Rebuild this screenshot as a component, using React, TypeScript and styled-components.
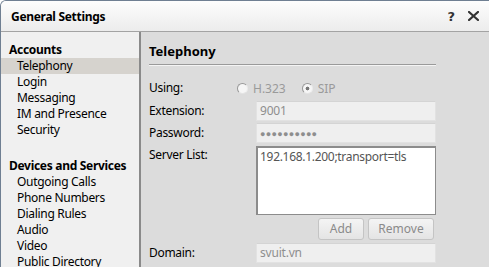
import React from "react";
import styled, { createGlobalStyle } from "styled-components";

const Global = createGlobalStyle`
  html, body { margin: 0; padding: 0; background: #ffffff; }
  body { font-family: "Noto Sans", "Open Sans", "Liberation Sans", sans-serif; font-size: 12px; color: #000; }
  * { box-sizing: border-box; }
`;

const Window = styled.div`
  width: 489px;
  height: 267px;
  display: flex;
  flex-direction: column;
  overflow: hidden;
  border-left: 1px solid #6f7f92;
  border-top: 1px solid #6f7f92;
  border-top-left-radius: 6px;
  background: #dcdcdc;
`;

const TitleBar = styled.div`
  height: 31px;
  flex: none;
  display: flex;
  align-items: center;
  justify-content: space-between;
  padding: 0 10px 0 10px;
  background: linear-gradient(#fdfdfd, #ececec);
  border-bottom: 1px solid #a3a3a3;
`;

const Title = styled.div`
  font-weight: bold;
  font-size: 12px;
  letter-spacing: -0.3px;
`;

const TitleButtons = styled.div`
  display: flex;
  align-items: center;
  gap: 13px;
  color: #333;
`;

const HelpGlyph = styled.span`
  font-weight: bold;
  font-size: 13px;
  font-family: "DejaVu Sans", sans-serif;
`;

const Body = styled.div`
  flex: 1;
  display: flex;
  min-height: 0;
`;

const Sidebar = styled.div`
  width: 140px;
  flex: none;
  background: #f0f0f0;
  border-right: 2px solid #8a8a8a;
  padding-top: 10px;
  display: flex;
  flex-direction: column;
  gap: 20px;
`;

const Group = styled.div`
  display: flex;
  flex-direction: column;
`;

const GroupHeader = styled.div`
  height: 16px;
  line-height: 16px;
  padding-left: 8px;
  font-weight: bold;
  letter-spacing: -0.3px;
`;

const NavItem = styled.div<{ $active?: boolean }>`
  height: 16px;
  line-height: 16px;
  padding-left: 16px;
  letter-spacing: -0.3px;
  background: ${(p) => (p.$active ? "#d6d3ce" : "transparent")};
`;

const Content = styled.div`
  flex: 1;
  padding: 10px 0 0 8px;
  background: #dcdcdc;
`;

const Heading = styled.div`
  width: 287px;
  font-weight: bold;
  font-size: 13px;
  height: 23px;
  line-height: 18px;
  border-bottom: 1px solid #9a9a9a;
  box-shadow: 0 1px 0 #f4f4f4;
`;

const Form = styled.div`
  display: grid;
  grid-template-columns: 107px 180px;
  margin-top: 13px;
  row-gap: 2px;
`;

const Label = styled.div<{ $tall?: boolean }>`
  height: ${(p) => (p.$tall ? "auto" : "20px")};
  line-height: 20px;
  letter-spacing: -0.3px;
`;

const RadioRow = styled.div`
  display: flex;
  align-items: center;
  height: 20px;
  margin-left: -19px;
  margin-bottom: 1px;
`;

const RadioOption = styled.div`
  display: flex;
  align-items: center;
  gap: 5px;
  color: #9a9a9a;
  margin-right: 16px;
`;

const RadioCircle = styled.span<{ $checked?: boolean }>`
  width: 11px;
  height: 11px;
  border-radius: 50%;
  background: radial-gradient(circle, ${(p) => (p.$checked ? "#777 0 1.6px, #f6f6f6 2.2px" : "#f6f6f6 0")});
  border: 1.5px solid #999;
  border-right-color: #ececec;
  border-bottom-color: #e4e4e4;
`;

const Field = styled.div`
  height: 20px;
  line-height: 18px;
  padding-left: 3px;
  background: #efefef;
  border: 1px solid #e2e2e2;
  border-top-color: #d4d4d4;
  color: #8e8e8e;
  letter-spacing: -0.2px;
`;

const Dots = styled.span`
  letter-spacing: 0.3px;
  font-size: 9px;
  color: #8e8e8e;
`;

const ListBox = styled.div`
  height: 69px;
  margin-top: 1px;
  background: #ffffff;
  border: 2px solid #8c8c8c;
  border-right-width: 1px;
  border-bottom-width: 1px;
  padding: 1px 0 0 2px;
  color: #555;
  line-height: 16px;
  letter-spacing: -0.3px;
`;

const ButtonRow = styled.div`
  display: flex;
  justify-content: flex-end;
  gap: 4px;
  padding-right: 2px;
  margin-top: 1px;
  margin-bottom: 1px;
`;

const Button = styled.div<{ $w: number }>`
  width: ${(p) => p.$w}px;
  height: 22px;
  line-height: 20px;
  text-align: center;
  color: #8a8a8a;
  background: linear-gradient(#f4f4f4, #e4e4e4);
  border: 1px solid #c4c4c4;
  border-radius: 3px;
`;

const Spacer = styled.div``;

export default function App() {
  return (
    <>
      <Global />
      <Window>
        <TitleBar>
          <Title>General Settings</Title>
          <TitleButtons>
            <HelpGlyph>?</HelpGlyph>
            <svg width="11" height="10" viewBox="0 0 11 10">
              <path d="M1 1 L10 9 M10 1 L1 9" stroke="#333" strokeWidth="2.2" strokeLinecap="square" />
            </svg>
          </TitleButtons>
        </TitleBar>
        <Body>
          <Sidebar>
            <Group>
              <GroupHeader>Accounts</GroupHeader>
              <NavItem $active>Telephony</NavItem>
              <NavItem>Login</NavItem>
              <NavItem>Messaging</NavItem>
              <NavItem>IM and Presence</NavItem>
              <NavItem>Security</NavItem>
            </Group>
            <Group>
              <GroupHeader>Devices and Services</GroupHeader>
              <NavItem>Outgoing Calls</NavItem>
              <NavItem>Phone Numbers</NavItem>
              <NavItem>Dialing Rules</NavItem>
              <NavItem>Audio</NavItem>
              <NavItem>Video</NavItem>
              <NavItem>Public Directory</NavItem>
            </Group>
          </Sidebar>
          <Content>
            <Heading>Telephony</Heading>
            <Form>
              <Label>Using:</Label>
              <RadioRow>
                <RadioOption>
                  <RadioCircle />
                  H.323
                </RadioOption>
                <RadioOption>
                  <RadioCircle $checked />
                  SIP
                </RadioOption>
              </RadioRow>
              <Label>Extension:</Label>
              <Field>9001</Field>
              <Label>Password:</Label>
              <Field>
                <Dots>●●●●●●●●●●</Dots>
              </Field>
              <Label $tall>Server List:</Label>
              <ListBox>192.168.1.200;transport=tls</ListBox>
              <Spacer />
              <ButtonRow>
                <Button $w={46}>Add</Button>
                <Button $w={66}>Remove</Button>
              </ButtonRow>
              <Label>Domain:</Label>
              <Field>svuit.vn</Field>
            </Form>
          </Content>
        </Body>
      </Window>
    </>
  );
}
